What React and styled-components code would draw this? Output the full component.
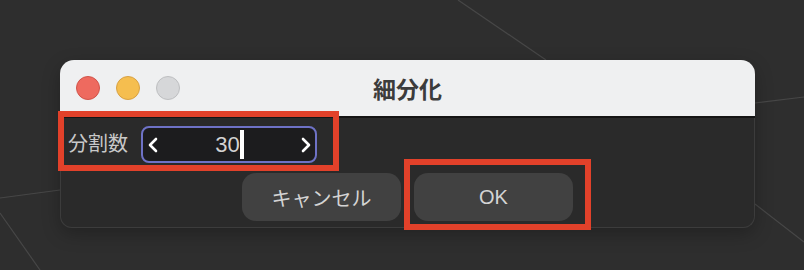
import React from 'react'
import styled, { createGlobalStyle } from 'styled-components';

const Global = createGlobalStyle`
html, body {
  margin: 0;
  padding: 0;
  background: #2e2e2e;
  overflow: hidden;
}
body {
  font-family: "Liberation Sans", "Noto Sans CJK JP", sans-serif;
}
`

const Desktop = styled.div`
position: relative;
width: 804px;
height: 270px;
padding: 60px 0 0 60px;
box-sizing: border-box;
background: #2e2e2e;
`
const Lines = styled.svg`
position: absolute;
left: 0;
top: 0;
z-index: 0;
`
const Window = styled.div`
position: relative;
z-index: 1;
width: 695px;
display: flex;
flex-direction: column;
box-shadow: 0 6px 18px rgba(0,0,0,0.25);
border-radius: 14px 14px 12px 12px;
`
const TitleBar = styled.div`
height: 56px;
background: #eff0f1;
border-radius: 14px 14px 0 0;
border-bottom: 2px solid #151515;
display: grid;
grid-template-columns: 1fr auto 1fr;
align-items: center;
padding: 0 16px;
`
const Lights = styled.div`
display: flex;
gap: 16px;
`
const Light = styled.span`
width: 24px;
height: 24px;
border-radius: 50%;
box-sizing: border-box;
background: ${p => p.color};
border: 1px solid ${p => p.edge};
`
const Title = styled.div`
font-size: 23px;
font-weight: bold;
color: #3c3c3c;
`
const Body = styled.div`
background: #2a2a2a;
border: 1px solid #3c3c3c;
border-top: none;
border-radius: 0 0 12px 12px;
padding: 8px 0 6px 7px;
display: flex;
flex-direction: column;
gap: 10px;
`
const Marked = styled.div`
position: relative;
display: ${p => p.inline ? 'inline-flex' : 'flex'};
align-self: flex-start;
`
const Highlight = styled.div`
position: absolute;
top: ${p => p.t}px;
left: ${p => p.l}px;
right: ${p => p.r}px;
bottom: ${p => p.b}px;
border: 6px solid #e2412a;
pointer-events: none;
z-index: 2;
`
const FieldRow = styled.div`
display: flex;
align-items: center;
gap: 13px;
`
const Label = styled.span`
font-size: 20px;
color: #c8c8c8;
line-height: 37px;
`
const Stepper = styled.div`
width: 176px;
height: 37px;
box-sizing: border-box;
border: 2px solid #6e72c6;
border-radius: 8px;
background: #1c1c1e;
display: flex;
align-items: center;
padding: 0 3px 0 4px;
`
const Value = styled.div`
flex: 1;
display: flex;
align-items: center;
justify-content: center;
font-size: 22px;
color: #d2d2d2;
`
const Caret = styled.span`
width: 4px;
height: 29px;
background: #ffffff;
`
const Buttons = styled.div`
display: flex;
justify-content: center;
gap: 13px;
padding-right: 7px;
`
const Button = styled.button`
width: 159px;
height: 48px;
border: 0;
border-radius: 14px;
background: #414141;
color: #d4d4d4;
font-family: "Liberation Sans", "Noto Sans CJK JP", sans-serif;
font-size: 20px;
cursor: pointer;
`

const Chevron = ({ dir }) => (
  <svg width="12" height="18" viewBox="0 0 12 18">
    <polyline
      points={dir === 'left' ? "9,3 3,9 9,15" : "3,3 9,9 3,15"}
      fill="none" stroke="#ffffff" strokeWidth="2.6"
      strokeLinecap="round" strokeLinejoin="round" />
  </svg>
)

const App = () => {
    return (
        <>
            <Global />
            <Desktop>
                <Lines width="804" height="270">
                    <g stroke="#474747" strokeWidth="1.2" fill="none">
                        <line x1="458" y1="0" x2="546" y2="60" />
                        <line x1="755" y1="103" x2="804" y2="97" />
                        <line x1="755" y1="204" x2="804" y2="242" />
                        <line x1="0" y1="198" x2="60" y2="190" />
                        <line x1="0" y1="213" x2="40" y2="270" />
                    </g>
                </Lines>
                <Window>
                    <TitleBar>
                        <Lights>
                            <Light color="#ee6a5f" edge="#d1544a" />
                            <Light color="#f5be4f" edge="#d8a143" />
                            <Light color="#d6d7d9" edge="#bebfc1" />
                        </Lights>
                        <Title>細分化</Title>
                        <div />
                    </TitleBar>
                    <Body>
                        <Marked inline>
                            <FieldRow>
                                <Label>分割数</Label>
                                <Stepper>
                                    <Chevron dir="left" />
                                    <Value>30<Caret /></Value>
                                    <Chevron dir="right" />
                                </Stepper>
                            </FieldRow>
                            <Highlight t={-15} l={-10} r={-22} b={-8} />
                        </Marked>
                        <Buttons>
                            <Button>キャンセル</Button>
                            <Marked inline>
                                <Button>OK</Button>
                                <Highlight t={-14} l={-10} r={-18} b={-9} />
                            </Marked>
                        </Buttons>
                    </Body>
                </Window>
            </Desktop>
        </>
    )
}

export default App;
